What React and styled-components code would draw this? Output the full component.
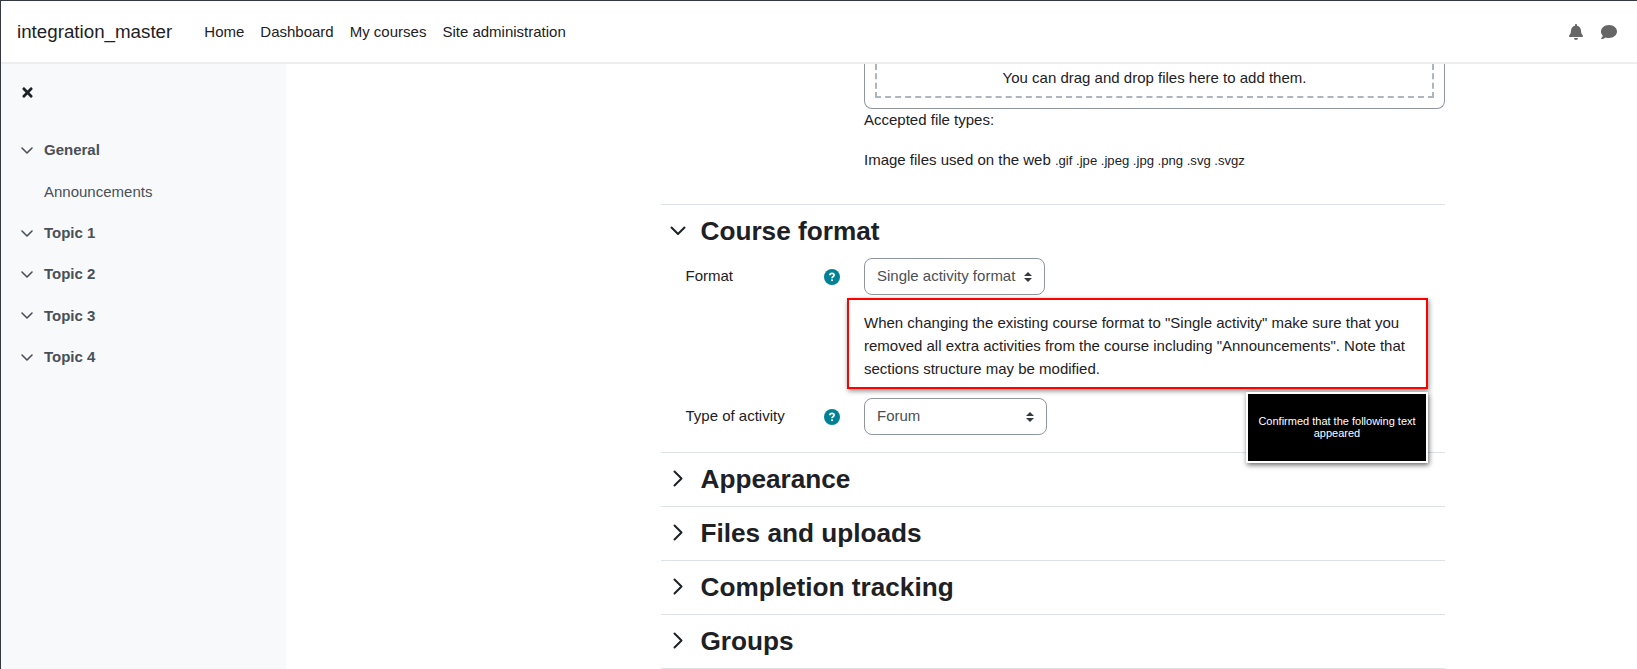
import React from "react";
import styled, { createGlobalStyle } from "styled-components";
import { FaBell, FaComment, FaTimes } from "react-icons/fa";

const Global = createGlobalStyle`
  html, body { margin: 0; padding: 0; height: 100%; background: #fff; overflow: hidden; }
  body { font-family: "Liberation Sans", Arial, sans-serif; font-size: 15px; line-height: 22.5px; color: #1d2125; }
  * { box-sizing: border-box; }
`;

const Page = styled.div`
  width: 1637px; height: 669px; border-top: 1px solid #343a40; border-left: 1px solid #343a40;
  display: flex; flex-direction: column; overflow: hidden;
`;
const Header = styled.header`
  height: 63px; flex: none; display: flex; align-items: center; padding: 1px 20px 0 16px;
  background: #fff; border-bottom: 2px solid #eeeeee;
`;
const Brand = styled.span`font-size: 18.75px; margin-right: 32px;`;
const NavLink = styled.a`margin-right: 16px; color: #1d2125; font-size: 15px;`;
const HeaderIcons = styled.div`margin-left: auto; display: flex; align-items: center; gap: 17px; color: #666; font-size: 16px;`;
const Body = styled.div`flex: 1; display: flex; min-height: 0;`;
const Sidebar = styled.aside`
  width: 285px; flex: none; background: #f8f9fa; padding: 19px 0 0 19px; color: #495057;
`;
const Close = styled.div`height: 18px; display: flex; align-items: center; color: #1d2125; font-size: 15px; margin-bottom: 29px;`;
const SideRow = styled.div`
  height: 41.3px; display: flex; align-items: center; gap: 10px; font-weight: ${p => (p.$bold ? 700 : 400)};
  padding-left: ${p => (p.$indent ? "24px" : "0")}; font-size: 15px;
`;
const Main = styled.main`flex: 1; min-width: 0; padding-left: 375px;`;
const Column = styled.div`width: 784px;`;
const Upper = styled.div`padding-left: 203px; height: 140px;`;
const DropOuter = styled.div`
  height: 45px; border: 1px solid #8f959e; border-top: 0; border-radius: 0 0 8px 8px; padding: 0 10px 10px;
`;
const Drop = styled.div`
  height: 34px; border: 2px dashed #adb5bd; border-top: 0;
  text-align: center; line-height: 28px; font-size: 15px;
`;
const Accepted = styled.div`line-height: 22px;`;
const FileTypes = styled.div`margin-top: 18px; line-height: 22px;`;
const Small = styled.span`font-size: 13.1px;`;
const Section = styled.section`border-top: 1px solid #dee2e6; position: relative;`;
const SectionHead = styled.div`
  height: 53px; display: flex; align-items: center; padding-bottom: 2px;
`;
const ChevronSlot = styled.span`width: 39.5px; flex: none; padding-right: 5.5px; display: flex; justify-content: center; color: #1d2125;`;
const Title = styled.h3`margin: 0; font-size: 26.2px; font-weight: 700; line-height: 30px;`;
const FormRow = styled.div`display: flex; align-items: center; height: 37px; padding-left: 24.5px;`;
const Label = styled.div`width: 138.5px; flex: none;`;
const HelpSlot = styled.div`width: 40px; flex: none; display: flex;`;
const Select = styled.div`
  width: ${p => p.$w}px; height: 37px; border: 1px solid #8f959e; border-radius: 8px; color: #495057;
  display: flex; align-items: center; justify-content: space-between; padding: 0 12px; font-size: 15px;
`;
const Note = styled.div`
  margin: 3px 0 9px 186px; width: 581px; height: 91px; border: 2px solid #f00; background: #fff;
  box-shadow: 1px 2px 5px rgba(0,0,0,.45); padding: 11px 10px 0 15px; line-height: 23px;
`;
const Toast = styled.div`
  position: absolute; left: 585px; top: 187px; width: 182px; height: 71px; background: #000; color: #fff;
  border: 2px solid #fff; box-shadow: 1px 2px 5px rgba(0,0,0,.6); font-size: 11px; line-height: 12px;
  text-align: center; padding: 21px 4px 0; z-index: 2;
`;
const RowGap = styled.div`height: 17px;`;

const ChevDown = () => (
  <svg width="16" height="10" viewBox="0 0 16 10" fill="none" stroke="currentColor" strokeWidth="2" strokeLinecap="round" strokeLinejoin="round"><polyline points="1.5,1.5 8,8 14.5,1.5" /></svg>
);
const ChevRight = () => (
  <svg width="12" height="17" viewBox="0 0 12 17" fill="none" stroke="currentColor" strokeWidth="2" strokeLinecap="round" strokeLinejoin="round"><polyline points="2.5,1.5 9.5,8.5 2.5,15.5" /></svg>
);
const SmallChev = () => (
  <svg width="14" height="9" viewBox="0 0 14 9" fill="none" stroke="#495057" strokeWidth="1.6" strokeLinecap="round" strokeLinejoin="round"><polyline points="2,2 7,7 12,2" /></svg>
);
const Spin = () => (
  <svg width="8" height="10" viewBox="0 0 4 5"><path fill="#343a40" d="M2 0L0 2h4zm0 5L0 3h4z" /></svg>
);
const HelpIcon = () => (
  <svg width="16" height="16" viewBox="0 0 16 16">
    <circle cx="8" cy="8" r="8" fill="#008196" />
    <path d="M5.9 6.2c0-1.3 1-1.9 2.1-1.9s2.1.7 2.1 1.8c0 1.6-2.1 1.6-2.1 3.1" fill="none" stroke="#fff" strokeWidth="1.7" />
    <rect x="7.1" y="10.4" width="1.8" height="1.7" fill="#fff" />
  </svg>
);

const collapsed = ["Appearance", "Files and uploads", "Completion tracking", "Groups"];

export default function App() {
  return (
    <Page>
      <Global />
      <Header>
        <Brand>integration_master</Brand>
        <NavLink>Home</NavLink>
        <NavLink>Dashboard</NavLink>
        <NavLink>My courses</NavLink>
        <NavLink>Site administration</NavLink>
        <HeaderIcons><FaBell /><FaComment /></HeaderIcons>
      </Header>
      <Body>
        <Sidebar>
          <Close><FaTimes /></Close>
          <SideRow $bold><SmallChev />General</SideRow>
          <SideRow $indent>Announcements</SideRow>
          {["Topic 1", "Topic 2", "Topic 3", "Topic 4"].map(t => (
            <SideRow $bold key={t}><SmallChev />{t}</SideRow>
          ))}
        </Sidebar>
        <Main>
          <Column>
            <Upper>
              <DropOuter><Drop>You can drag and drop files here to add them.</Drop></DropOuter>
              <Accepted>Accepted file types:</Accepted>
              <FileTypes>Image files used on the web <Small>.gif .jpe .jpeg .jpg .png .svg .svgz</Small></FileTypes>
            </Upper>
            <Section>
              <SectionHead><ChevronSlot><ChevDown /></ChevronSlot><Title>Course format</Title></SectionHead>
              <FormRow>
                <Label>Format</Label>
                <HelpSlot><HelpIcon /></HelpSlot>
                <Select $w={181}>Single activity format <Spin /></Select>
              </FormRow>
              <Note>When changing the existing course format to "Single activity" make sure that you removed all extra activities from the course including "Announcements". Note that sections structure may be modified.</Note>
              <FormRow>
                <Label>Type of activity</Label>
                <HelpSlot><HelpIcon /></HelpSlot>
                <Select $w={183}>Forum <Spin /></Select>
              </FormRow>
              <RowGap />
              <Toast>Confirmed that the following text appeared</Toast>
            </Section>
            {collapsed.map(t => (
              <Section key={t}>
                <SectionHead><ChevronSlot><ChevRight /></ChevronSlot><Title>{t}</Title></SectionHead>
              </Section>
            ))}
            <Section />
          </Column>
        </Main>
      </Body>
    </Page>
  );
}
